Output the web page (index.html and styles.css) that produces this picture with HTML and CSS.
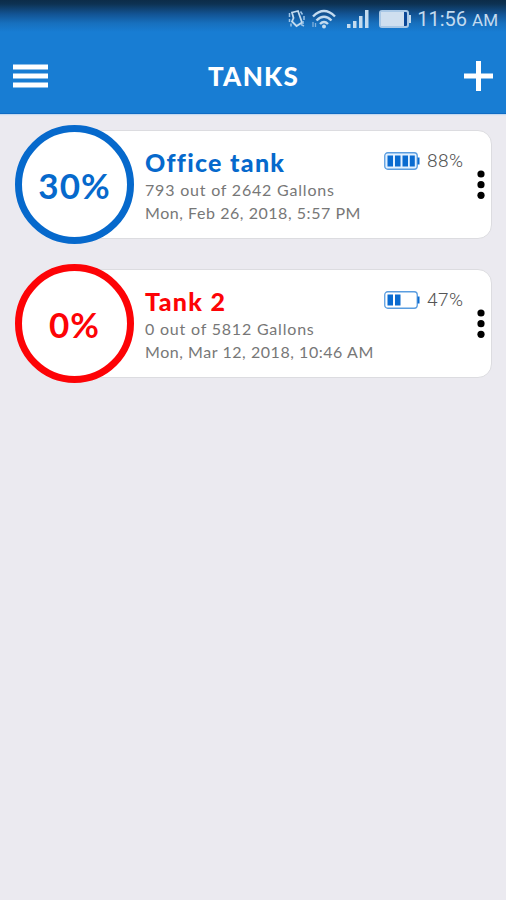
FILE: index.html
```
<!DOCTYPE html>
<html lang="en">
<head>
    <meta charset="UTF-8">
    <title>Tanks</title>
    <link rel="stylesheet" href="styles.css">
</head>
<body>
    <header class="header">
        <div class="statusbar">
            <svg class="icon-silent" width="18" height="20" viewBox="0 0 18 20">
                <path d="M4 3.500L10 2l4 11.500L8.500 17 4 12.500 5.500 9z" fill="none" stroke="#c3dbef" stroke-width="1.800"/>
                <path d="M1.500 4v4M1.500 10v3M3 14.500v3M12.500 2.500l2 3M16 7v4M13 15.500l3 1.500M15 12v3" fill="none" stroke="#9cc4e8" stroke-width="1.500"/>
            </svg>
            <svg class="icon-wifi" width="26" height="20" viewBox="0 0 26 20">
                <path d="M2 7.500Q13-3.500 24 7.500M5.500 11.500Q13 4 20.500 11.500M9 15Q13 11 17 15" fill="none" stroke="#c3dbef" stroke-width="2.400"/>
                <circle cx="13" cy="17.500" r="2" fill="#c3dbef"/>
                <path d="M2 13v5M4.500 14v4" stroke="#7fb0dc" stroke-width="1.300"/>
            </svg>
            <svg class="icon-signal" width="22" height="18" viewBox="0 0 22 18">
                <path d="M0 14h3.500v4H0zM6 11h3.500v7H6zM12 6h3.500v12H12zM18 0h3.500v18H18z" fill="#c3dbef"/>
            </svg>
            <svg class="icon-power" width="32" height="18" viewBox="0 0 32 18">
                <rect x="1" y="1" width="28" height="16" rx="2" fill="#0b4797" stroke="#a9c8e6" stroke-width="2"/>
                <rect x="2" y="2" width="23" height="14" fill="#cfdfef"/>
                <rect x="30" y="5" width="2" height="8" fill="#c3dbef"/>
            </svg>
            <span class="clock">11:56 <small>AM</small></span>
        </div>
        <div class="navbar">
            <svg width="35" height="24" viewBox="0 0 35 24">
                <path d="M0 .5h35v5H0zM0 9.500h35v5H0zM0 18.500h35v5H0z" fill="#fff"/>
            </svg>
            <h1>TANKS</h1>
            <svg width="29" height="30" viewBox="0 0 29 30">
                <path d="M12 0h5v12.500h12v5H17V30h-5V17.500H0v-5h12z" fill="#fff"/>
            </svg>
        </div>
    </header>

    <main class="list">
        <div class="tank ok">
            <div class="level"><span>30%</span></div>
            <div class="card">
                <div class="info">
                    <h2>Office tank</h2>
                    <p class="amount">793 out of 2642 Gallons</p>
                    <p class="date">Mon, Feb 26, 2018, 5:57 PM</p>
                </div>
                <div class="battery">
                    <svg width="36" height="18" viewBox="0 0 36 18">
                        <rect x=".75" y=".75" width="32.500" height="16.500" rx="3" fill="#e3f1ff" stroke="#5a9de0" stroke-width="1.300"/>
                        <path d="M3.500 3.500H9v11H3.500zM11 3.500h5.500v11H11zM18.500 3.500H24v11h-5.500zM25.800 3.500h5v11h-5zM33.500 5.500h2v7h-2z" fill="#0a6bd0"/>
                    </svg>
                    <span>88%</span>
                </div>
                <svg class="menu" width="8" height="30" viewBox="0 0 8 30">
                    <circle cx="4" cy="4" r="3.600"/>
                    <circle cx="4" cy="14.700" r="3.600"/>
                    <circle cx="4" cy="25.300" r="3.600"/>
                </svg>
            </div>
        </div>

        <div class="tank empty">
            <div class="level"><span>0%</span></div>
            <div class="card">
                <div class="info">
                    <h2>Tank 2</h2>
                    <p class="amount">0 out of 5812 Gallons</p>
                    <p class="date">Mon, Mar 12, 2018, 10:46 AM</p>
                </div>
                <div class="battery">
                    <svg width="36" height="18" viewBox="0 0 36 18">
                        <rect x=".75" y=".75" width="32.500" height="16.500" rx="3" fill="#fff" stroke="#5a9de0" stroke-width="1.300"/>
                        <path d="M3.500 3.500H9v11H3.500zM11 3.500h5.500v11H11zM33.500 5.500h2v7h-2z" fill="#0a6bd0"/>
                    </svg>
                    <span>47%</span>
                </div>
                <svg class="menu" width="8" height="30" viewBox="0 0 8 30">
                    <circle cx="4" cy="4" r="3.600"/>
                    <circle cx="4" cy="14.700" r="3.600"/>
                    <circle cx="4" cy="25.300" r="3.600"/>
                </svg>
            </div>
        </div>
    </main>
</body>
</html>
```
FILE: styles.css
```
body {
    font-family: Lato, sans-serif;
    margin: 0;
    background-color: #ebeaf0;
    min-height: 900px;
}
h1, h2, p {
    margin: 0;
    white-space: nowrap;
}
svg {
    display: block;
    flex: none;
}
.header {
    height: 114px;
    box-sizing: border-box;
    border-bottom: 1px solid #0f6cc4;
    background: linear-gradient(#0c2c48 0, #0d3252 4px, #125393 14px, #176fbd 23px, #187dd3 32px);
    box-shadow: 0 1px 1px #c5d9ef;
}
.statusbar {
    height: 38px;
    display: flex;
    align-items: center;
    justify-content: flex-end;
    padding-right: 8px;
}
.icon-wifi {
    margin-left: 5px;
}
.icon-signal {
    margin-left: 10px;
}
.icon-power {
    margin-left: 10px;
}
.clock {
    font: 20px Roboto, sans-serif;
    color: #c3dbef;
    margin-left: 6px;
    white-space: nowrap;
}
.clock small {
    font-size: 17px;
}
.navbar {
    height: 75px;
    display: flex;
    align-items: center;
    justify-content: space-between;
    padding: 0 13px;
}
h1 {
    font-size: 26px;
    font-weight: 900;
    letter-spacing: 1.3px;
    margin-right: 5px;
    color: #fff;
}
.list {
    padding: 10.5px 14px 0 15px;
}
.tank {
    display: flex;
    align-items: center;
    height: 119px;
    margin-bottom: 20px;
}
.level {
    position: relative;
    flex: none;
    width: 119px;
    height: 119px;
    box-sizing: border-box;
    border: 7px solid;
    border-radius: 50%;
    background: #fff;
    display: flex;
    align-items: center;
    justify-content: center;
    font-size: 35px;
    font-weight: bold;
    letter-spacing: 1px;
}
.level span {
    padding-top: 1px;
}
.ok .level, .ok h2 {
    color: #0669cc;
}
.empty .level, .empty h2 {
    color: #fd0306;
}
.card {
    flex: 1;
    display: flex;
    height: 109px;
    box-sizing: border-box;
    margin-left: -60px;
    padding-left: 70px;
    background: #fff;
    border: 1px solid #dcdce0;
    border-radius: 14px;
}
.info {
    flex: 1;
    width: 0;
    padding-top: 16px;
}
h2 {
    font-size: 25px;
    line-height: 31px;
    font-weight: 900;
    letter-spacing: 1.3px;
}
.info p {
    font-size: 16px;
    line-height: 23px;
    color: #777;
}
.info .amount {
    letter-spacing: .8px;
}
.info .date {
    letter-spacing: .55px;
}
.battery {
    display: flex;
    align-items: center;
    height: 18px;
    margin-top: 21px;
    font: 300 19px Roboto, sans-serif;
    letter-spacing: .5px;
    color: #555;
}
.battery span {
    width: 37px;
    margin-left: 7px;
}
.menu {
    margin: 39px 6px 0 13px;
}
```
